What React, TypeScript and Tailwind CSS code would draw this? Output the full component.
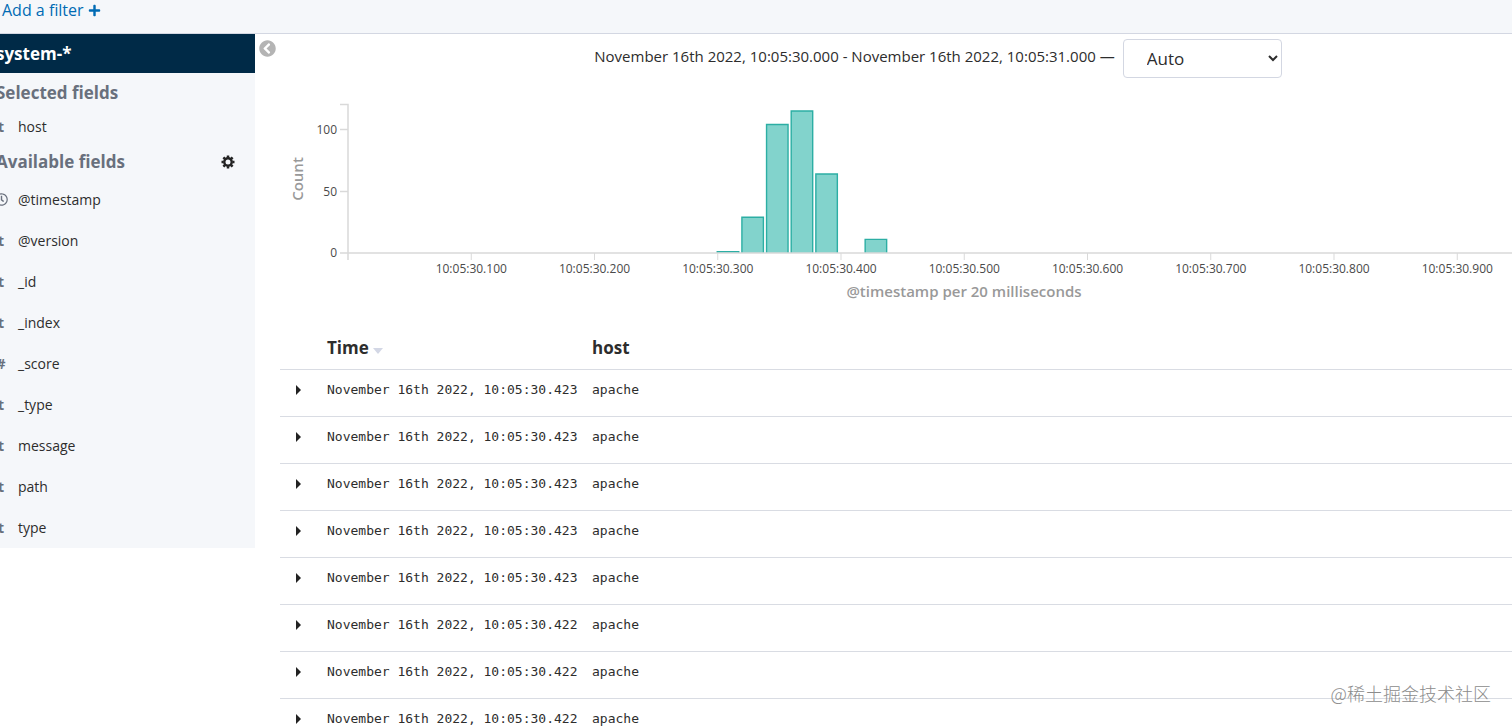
import { FaChevronCircleLeft, FaPlus, FaRegClock } from 'react-icons/fa'

type Field = {
  name: string
  kind: 't' | '#' | 'date'
}

const selectedFields: Field[] = [{ name: 'host', kind: 't' }]

const availableFields: Field[] = [
  { name: '@timestamp', kind: 'date' },
  { name: '@version', kind: 't' },
  { name: '_id', kind: 't' },
  { name: '_index', kind: 't' },
  { name: '_score', kind: '#' },
  { name: '_type', kind: 't' },
  { name: 'message', kind: 't' },
  { name: 'path', kind: 't' },
  { name: 'type', kind: 't' },
]

const rows = [
  { time: 'November 16th 2022, 10:05:30.423', host: 'apache' },
  { time: 'November 16th 2022, 10:05:30.423', host: 'apache' },
  { time: 'November 16th 2022, 10:05:30.423', host: 'apache' },
  { time: 'November 16th 2022, 10:05:30.423', host: 'apache' },
  { time: 'November 16th 2022, 10:05:30.423', host: 'apache' },
  { time: 'November 16th 2022, 10:05:30.422', host: 'apache' },
  { time: 'November 16th 2022, 10:05:30.422', host: 'apache' },
  { time: 'November 16th 2022, 10:05:30.422', host: 'apache' },
]

// bucket = offset in 20ms steps from 10:05:30.000
const buckets = [
  { bucket: 15, count: 1 },
  { bucket: 16, count: 29 },
  { bucket: 17, count: 104 },
  { bucket: 18, count: 115 },
  { bucket: 19, count: 64 },
  { bucket: 21, count: 11 },
]

const ticks = [100, 200, 300, 400, 500, 600, 700, 800, 900]

const AXIS_X = 68
const BASE_Y = 163
const STEP = 24.65
const UNIT = 1.235

function GearIcon() {
  return (
    <svg viewBox="0 0 14 14" className="w-[14px] h-[14px]" fill="none" stroke="currentColor">
      <circle cx="7" cy="7" r="3.7" strokeWidth="2.4" />
      {[0, 45, 90, 135, 180, 225, 270, 315].map((a) => (
        <path key={a} d="M7 2.6V0.5" strokeWidth="2.5" transform={`rotate(${a} 7 7)`} />
      ))}
    </svg>
  )
}

function FieldItem({ field, className }: { field: Field; className: string }) {
  return (
    <li className={`flex items-center ${className}`}>
      <span className="w-6 pr-2.5 shrink-0 flex justify-center text-sm font-bold text-[#69707d]">
        {field.kind === 'date' ? <FaRegClock className="w-[13px] h-[13px]" /> : field.kind}
      </span>
      <a href="#" className="text-sm text-[#2d2d2d]">{field.name}</a>
    </li>
  )
}

function Sidebar() {
  return (
    <aside className="w-[255px] shrink-0 self-start overflow-hidden bg-[#f5f7fa]">
      <h1 className="h-[39px] bg-[#002a47] text-white text-[17px] font-bold flex items-center">
        <span className="-ml-1">system-*</span>
      </h1>
      <div className="-ml-1">
        <h2 className="h-10 flex items-center text-[17px] font-bold text-[#69707d]">Selected fields</h2>
        <ul className="-ml-0.5">
          {selectedFields.map((f) => (
            <FieldItem key={f.name} field={f} className="h-7" />
          ))}
        </ul>
        <div className="h-[42px] flex items-center justify-between pr-5">
          <h2 className="text-[17px] font-bold text-[#69707d]">Available fields</h2>
          <button aria-label="Field settings" className="text-[#222] cursor-pointer">
            <GearIcon />
          </button>
        </div>
        <ul className="-ml-0.5 -mt-1">
          {availableFields.map((f) => (
            <FieldItem key={f.name} field={f} className="h-[41px]" />
          ))}
        </ul>
      </div>
    </aside>
  )
}

function Histogram() {
  return (
    <svg width="100%" height="220" className="block text-xs" role="img" aria-label="Count per 20 milliseconds">
      {buckets.map((b) => {
        const x = AXIS_X + b.bucket * STEP - 0.5
        const y = BASE_Y - b.count * UNIT
        return (
          <path
            key={b.bucket}
            d={`M${x} ${BASE_Y}V${y}h21.5V${BASE_Y}`}
            fill="#82d3cc"
            stroke="#2caea4"
            strokeWidth="1.4"
          />
        )
      })}

      {/* Axes */}
      <path d="M60 14.5H68V170M60 39.5H68M60 101.5H68" fill="none" stroke="#d9d9d9" strokeWidth="1.5" />
      <line x1="60" y1={BASE_Y} x2="100%" y2={BASE_Y} stroke="#d9d9d9" strokeWidth="1.5" />
      {ticks.map((t, i) => (
        <g key={t}>
          <line
            x1={AXIS_X + (i + 1) * STEP * 5}
            x2={AXIS_X + (i + 1) * STEP * 5}
            y1={BASE_Y}
            y2={BASE_Y + 7}
            stroke="#d9d9d9"
          />
          <text x={AXIS_X + (i + 1) * STEP * 5} y="183" textAnchor="middle" fill="#4a4a4a">
            10:05:30.{t}
          </text>
        </g>
      ))}

      <g fill="#4a4a4a" textAnchor="end">
        <text x="57" y="44">100</text>
        <text x="57" y="106">50</text>
        <text x="57" y="167">0</text>
      </g>

      <g fill="#999" fontSize="15" fontWeight="600" textAnchor="middle">
        <text transform="translate(23 89) rotate(-90)">Count</text>
        <text x="684" y="207">@timestamp per 20 milliseconds</text>
      </g>
    </svg>
  )
}

function DocTable() {
  return (
    <table className="w-full table-fixed text-left text-[#2d2d2d]">
      <thead>
        <tr className="h-[59px] border-b border-[#d9dce3] text-[17px]">
          <th className="w-[47px]" />
          <th className="w-[265px] pt-4 font-bold">
            <span className="flex items-center gap-1">
              Time
              <svg viewBox="0 0 10 6" className="w-[10px] h-[6px] mt-2" fill="#d3d7e5">
                <path d="M0 0H10L5 6Z" />
              </svg>
            </span>
          </th>
          <th className="pt-4 font-bold">host</th>
        </tr>
      </thead>
      <tbody>
        {rows.map((row, i) => (
          <tr key={i} className="h-[47px] border-b border-[#d9dce3] font-['DejaVu_Sans_Mono',monospace] text-[13px]">
            <td className="pb-1.5">
              <button aria-label="Toggle row details" className="block ml-4 cursor-pointer">
                <svg viewBox="0 0 5 10" className="w-[5px] h-[10px]" fill="#222">
                  <path d="M0 0L5 5L0 10Z" />
                </svg>
              </button>
            </td>
            <td className="pb-1.5 whitespace-nowrap">{row.time}</td>
            <td className="pb-1.5">{row.host}</td>
          </tr>
        ))}
      </tbody>
    </table>
  )
}

export default function App() {
  return (
    <div className="relative h-screen overflow-hidden bg-white font-['Open_Sans',sans-serif] text-[#2d2d2d]">
      <div className="h-[34px] bg-[#f5f7fa] border-b border-[#d3d7e2] pl-0.5">
        <a href="#" className="flex w-fit items-center gap-1 h-5 text-base text-[#006bb4]">
          Add a filter
          <FaPlus className="w-[13px] h-[13px]" />
        </a>
      </div>

      <div className="flex">
        <Sidebar />
        <div className="w-[25px] shrink-0 pt-1.5 pl-1">
          <button aria-label="Collapse sidebar" className="block text-[#b4b4b4] cursor-pointer">
            <FaChevronCircleLeft className="w-[17px] h-[17px]" />
          </button>
        </div>

        <main className="flex-1 min-w-0">
          <div className="flex items-start justify-center gap-2 pl-[84px] pt-[5px]">
            <label htmlFor="interval" className="pt-1.5 text-[15px] whitespace-nowrap">
              November 16th 2022, 10:05:30.000 - November 16th 2022, 10:05:31.000 —
            </label>
            <select
              id="interval"
              className="w-[159px] h-[39px] shrink-0 rounded border border-[#d3d7e2] bg-white pl-[19px] text-[17px]"
            >
              <option>Auto</option>
            </select>
          </div>
          <div className="mt-3">
            <Histogram />
          </div>
          <DocTable />
        </main>
      </div>

      <div className="absolute right-[21px] bottom-[19px] text-lg font-light text-[#8c8c8c] font-['Noto_Sans_CJK_SC',sans-serif]">
        @稀土掘金技术社区
      </div>
    </div>
  )
}
